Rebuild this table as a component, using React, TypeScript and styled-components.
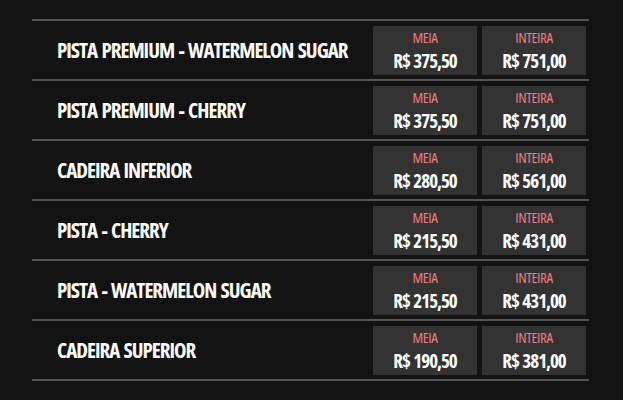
import React from "react";
import styled, { createGlobalStyle } from "styled-components";

const GlobalStyle = createGlobalStyle`
  html, body {
    margin: 0;
    padding: 0;
    background: #131313;
  }
  body {
    font-family: "Open Sans", "Roboto", sans-serif;
    font-stretch: 75%;
    color: #ffffff;
  }
`;

const Page = styled.div`
  padding: 19px 34px 0 32px;
`;

const Table = styled.div`
  border-top: 2px solid #545454;
  display: flex;
  flex-direction: column;
`;

const Row = styled.div`
  height: 58px;
  border-bottom: 2px solid #545454;
  display: flex;
  align-items: center;
  justify-content: space-between;
  padding: 0 3px 0 25px;
`;

const Name = styled.div`
  font-weight: 700;
  font-size: 21px;
  letter-spacing: -1px;
  word-spacing: 1.5px;
  line-height: 24px;
  white-space: nowrap;
`;

const Prices = styled.div`
  display: flex;
  gap: 5px;
`;

const PriceBox = styled.div`
  width: 104px;
  height: 49px;
  background: #333333;
  display: flex;
  flex-direction: column;
  align-items: center;
  justify-content: center;
  gap: 5.5px;
`;

const Label = styled.div`
  color: #ee7b80;
  font-size: 15px;
  font-weight: 500;
  line-height: 16px;
  letter-spacing: -0.4px;
`;

const Value = styled.div`
  font-size: 19px;
  font-weight: 700;
  line-height: 20px;
  letter-spacing: -1px;
  word-spacing: 1px;
  white-space: nowrap;
`;

const rows = [
  { name: "PISTA PREMIUM - WATERMELON SUGAR", meia: "R$ 375,50", inteira: "R$ 751,00" },
  { name: "PISTA PREMIUM - CHERRY", meia: "R$ 375,50", inteira: "R$ 751,00" },
  { name: "CADEIRA INFERIOR", meia: "R$ 280,50", inteira: "R$ 561,00" },
  { name: "PISTA - CHERRY", meia: "R$ 215,50", inteira: "R$ 431,00" },
  { name: "PISTA - WATERMELON SUGAR", meia: "R$ 215,50", inteira: "R$ 431,00" },
  { name: "CADEIRA SUPERIOR", meia: "R$ 190,50", inteira: "R$ 381,00" },
];

export default function App() {
  return (
    <>
      <GlobalStyle />
      <Page>
        <Table>
          {rows.map((r) => (
            <Row key={r.name}>
              <Name>{r.name}</Name>
              <Prices>
                <PriceBox>
                  <Label>MEIA</Label>
                  <Value>{r.meia}</Value>
                </PriceBox>
                <PriceBox>
                  <Label>INTEIRA</Label>
                  <Value>{r.inteira}</Value>
                </PriceBox>
              </Prices>
            </Row>
          ))}
        </Table>
      </Page>
    </>
  );
}
